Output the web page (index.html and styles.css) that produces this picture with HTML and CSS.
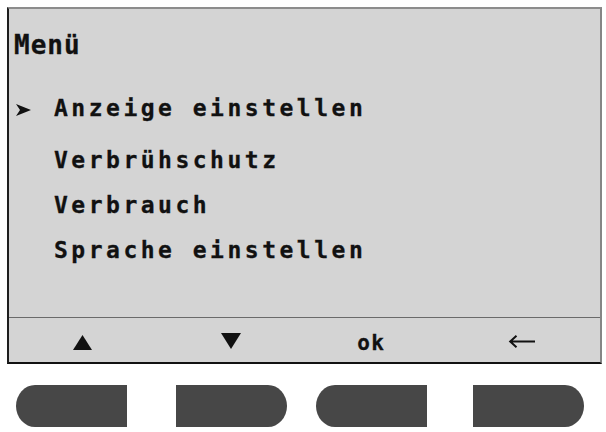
FILE: index.html
```html
<!DOCTYPE html>
<html lang="de">
<head>
<meta charset="utf-8">
<title>Menü</title>
<link rel="stylesheet" href="styles.css">
</head>
<body>
<div class="page">
  <div class="screen">
    <div class="menu">
      <div class="title">Menü</div>
      <ul class="items">
        <li class="item selected">
          <span class="marker"><svg width="15" height="12" viewBox="0 0 15 12"><polygon points="0,0 15,6 0,12 4,6" fill="#111"/></svg></span>
          <span class="label">Anzeige einstellen</span>
        </li>
        <li class="item first-after"><span class="marker"></span><span class="label">Verbrühschutz</span></li>
        <li class="item"><span class="marker"></span><span class="label">Verbrauch</span></li>
        <li class="item"><span class="marker"></span><span class="label">Sprache einstellen</span></li>
      </ul>
    </div>
    <div class="softkeys">
      <div class="key"><svg class="up" width="19" height="15" viewBox="0 0 19 15"><polygon points="9.5,0 19,15 0,15" fill="#111"/></svg></div>
      <div class="key"><svg class="down" width="20" height="16" viewBox="0 0 20 16"><polygon points="0,0 20,0 10,16" fill="#111"/></svg></div>
      <div class="key"><span class="ok">ok</span></div>
      <div class="key"><svg class="back" width="28" height="13" viewBox="0 0 28 13"><path d="M27 6.5H2.5M8.5 0.8L2.2 6.5L8.5 12.2" fill="none" stroke="#111" stroke-width="2"/></svg></div>
    </div>
  </div>
  <div class="buttons">
    <div class="btn round-left"></div>
    <div class="btn round-right gap-wide"></div>
    <div class="btn round-left gap-narrow"></div>
    <div class="btn round-right gap-wide2"></div>
  </div>
</div>
</body>
</html>
```
FILE: styles.css
```css
html, body {
  margin: 0;
  padding: 0;
  background: #ffffff;
}
.page {
  padding: 7px 0 0 7px;
  font-family: "DejaVu Sans Mono", "Liberation Mono", monospace;
  font-weight: bold;
  color: #111;
}
.screen {
  box-sizing: border-box;
  width: 595px;
  height: 357px;
  background: #d4d4d4;
  border-top: 2px solid #8c8c8c;
  border-right: 2px solid #858585;
  border-left: 2px solid #1e1e1e;
  border-bottom: 2px solid #111;
  display: flex;
  flex-direction: column;
}
.menu {
  height: 308px;
  box-sizing: border-box;
  padding: 23px 0 0 5px;
}
.title {
  font-size: 26px;
  line-height: 26px;
  letter-spacing: 1px;
  -webkit-text-stroke: 0.3px #111;
}
.items {
  list-style: none;
  margin: 39px 0 0 0;
  padding: 0 0 0 2px;
}
.item {
  display: flex;
  align-items: center;
  height: 22px;
  font-size: 23px;
  line-height: 22px;
  letter-spacing: 3.5px;
  margin-top: 23px;
  -webkit-text-stroke: 0.3px #111;
}
.item.selected {
  margin-top: 0;
}
.item.first-after {
  margin-top: 30px;
}
.marker {
  width: 15px;
  height: 12px;
  margin-right: 23px;
  margin-top: 3px;
  display: flex;
}
.softkeys {
  flex: 1;
  border-top: 1px solid #6a6a6a;
  display: grid;
  grid-template-columns: repeat(4, 1fr);
  align-items: center;
  justify-items: center;
}
.key {
  display: flex;
  align-items: center;
  justify-content: center;
  margin-top: 3px;
}
.key .up { margin-top: 2px; }
.key .down { margin-top: -1px; }
.ok {
  font-size: 21px;
  line-height: 20px;
  letter-spacing: 1.5px;
  margin-right: 14px;
  margin-top: 2px;
  -webkit-text-stroke: 0.3px #111;
}
.back {
  margin-right: 8px;
}
.buttons {
  display: flex;
  margin-top: 21px;
  padding-left: 9px;
}
.btn {
  width: 111px;
  height: 42px;
  background: #474747;
}
.round-left {
  border-radius: 19px 0 0 19px / 21px 0 0 21px;
}
.round-right {
  border-radius: 0 19px 19px 0 / 0 21px 21px 0;
}
.gap-wide { margin-left: 49px; }
.gap-narrow { margin-left: 29px; }
.gap-wide2 { margin-left: 46px; }
```
